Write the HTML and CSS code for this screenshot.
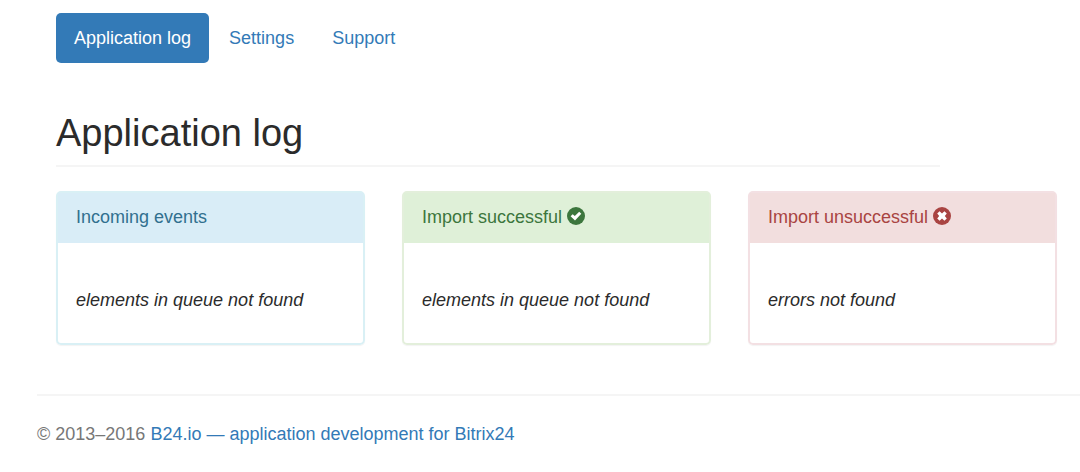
FILE: index.html
```html
<!DOCTYPE html>
<html lang="en">
<head>
<meta charset="utf-8">
<title>Application log</title>
<link rel="stylesheet" href="styles.css">
</head>
<body>
<div class="container">
  <nav class="pills">
    <a class="pill active" href="#log" aria-current="page">Application log</a>
    <a class="pill" href="#settings">Settings</a>
    <a class="pill" href="#support">Support</a>
  </nav>
  <main>
    <h1 class="page-header">Application log</h1>
    <div class="panels">
      <section class="panel info">
        <h2 class="panel-heading">Incoming events</h2>
        <p class="panel-body">elements in queue not found</p>
      </section>
      <section class="panel success">
        <h2 class="panel-heading">Import successful
          <svg class="icon" viewBox="0 0 18 18" aria-hidden="true"><circle cx="9" cy="9" r="9" fill="currentColor"/><path class="mark" d="M3.6 9.3 5.7 7.2 7.8 9.1 12.2 4.7 14.3 6.8 8 13.4Z"/></svg></h2>
        <p class="panel-body">elements in queue not found</p>
      </section>
      <section class="panel danger">
        <h2 class="panel-heading">Import unsuccessful
          <svg class="icon" viewBox="0 0 18 18" aria-hidden="true"><circle cx="9" cy="9" r="9" fill="currentColor"/><path class="mark" d="M6.6 4.2 9 6.4 11.4 4.2 13.8 6.6 11.8 9 13.8 11.4 11.4 13.8 9 11.6 6.6 13.8 4.2 11.4 6.2 9 4.2 6.6Z"/></svg></h2>
        <p class="panel-body">errors not found</p>
      </section>
    </div>
  </main>
</div>
<footer class="footer">© 2013–2016 <a href="#b24">B24.io — application development for Bitrix24</a></footer>
</body>
</html>
```
FILE: styles.css
```css
* {
  box-sizing: border-box;
}

body {
  margin: 0;
  background: #fff;
  color: #2b2b2b;
  font: 18px/26px "Liberation Sans", Arial, sans-serif;
}

a {
  color: #337ab7;
  text-decoration: none;
}

.container {
  padding: 13px 23px 0 56px;
}

.pills {
  display: flex;
  gap: 2px;
}

.pill {
  padding: 12px 18px;
  border-radius: 5px;
}

.pill.active {
  background: #337ab7;
  color: #fff;
}

.page-header {
  margin: 48px 117px 24px 0;
  padding-bottom: 10px;
  border-bottom: 2px solid #f5f5f5;
  font-size: 38px;
  font-weight: 400;
  line-height: 44px;
}

.panels {
  display: grid;
  grid-template-columns: repeat(3, 1fr);
  gap: 37px;
}

.panel {
  border: 2px solid;
  border-radius: 5px;
  box-shadow: 0 1px 1px rgba(0, 0, 0, 0.05);
}

.panel-heading {
  margin: 0;
  padding: 11px 18px 13px;
  font-size: 18px;
  font-weight: 400;
  line-height: 26px;
}

.panel-body {
  margin: 0;
  padding: 44px 18px 30px;
  font-style: italic;
}

.info {
  border-color: #d9f0f5;
}

.info .panel-heading {
  background: #d9edf7;
  color: #31708f;
}

.success {
  border-color: #e3efdb;
}

.success .panel-heading {
  background: #dff0d8;
  color: #3c763d;
}

.danger {
  border-color: #f3e0e3;
}

.danger .panel-heading {
  background: #f2dede;
  color: #a94442;
}

.icon {
  width: 18px;
  height: 18px;
  vertical-align: -2px;
}

.mark {
  fill: #fff;
}

.footer {
  margin: 49px 0 0 37px;
  padding: 25px 0 24px;
  border-top: 2px solid #f5f5f5;
  color: #777;
}
```
